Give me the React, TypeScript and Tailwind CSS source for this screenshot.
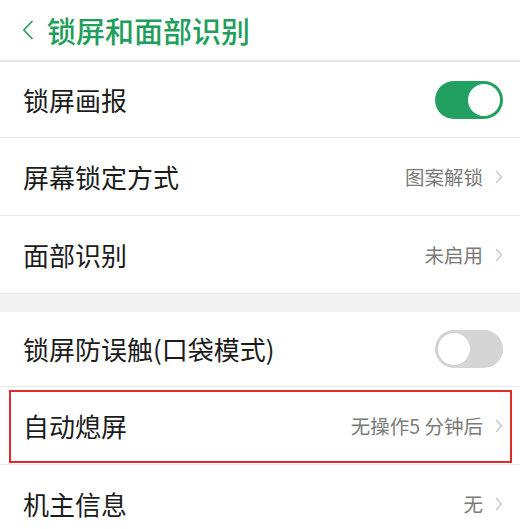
import React from "react";

const font = { fontFamily: '"Noto Sans CJK SC", "Noto Sans", sans-serif' };

function Chevron() {
  return (
    <svg width="8" height="16" viewBox="0 0 8 16" className="ml-[12px]">
      <polyline points="1.5,2.5 6.5,8 1.5,13.5" fill="none" stroke="#c8c8c8" strokeWidth="1.3" strokeLinecap="round" strokeLinejoin="round" />
    </svg>
  );
}

function ToggleOn() {
  return (
    <div className="w-[68px] h-[38px] rounded-full bg-[#22a061] flex items-center justify-end pr-[3px]">
      <div className="w-[32px] h-[32px] rounded-full bg-white" />
    </div>
  );
}

function ToggleOff() {
  return (
    <div className="w-[68px] h-[38px] rounded-full bg-[#d5d5d5] flex items-center justify-start pl-[2px]">
      <div className="w-[34px] h-[34px] rounded-full bg-white border border-[#cfcfcf]" />
    </div>
  );
}

function Row({ label, value, right, h, border = true, highlight = false }: { label: string; value?: string; right?: React.ReactNode; h: string; border?: boolean; highlight?: boolean }) {
  return (
    <div className={`relative flex items-center pl-[23px] pr-[17px] ${h} ${border ? "border-b border-[#e8e8e8]" : ""}`}>
      <span className="text-[26px] text-[#1b1b1b] leading-none flex-1">{label}</span>
      {right}
      {value !== undefined && (
        <div className="flex items-center">
          <span className="text-[19.5px] text-[#7a7a7a] leading-none">{value}</span>
          <Chevron />
        </div>
      )}
      {highlight && <div className="absolute left-[9px] right-[8px] top-[3px] bottom-[1px] border-2 border-[#e02a2a] pointer-events-none" />}
    </div>
  );
}

export default function App() {
  return (
    <div className="w-[520px] h-[529px] bg-white overflow-hidden" style={font}>
      <div className="h-[62px] flex items-center pl-[22px] border-b-2 border-[#e6e6e6]">
        <svg width="12" height="20" viewBox="0 0 12 20">
          <polyline points="10,1.5 1.8,10 10,18.5" fill="none" stroke="#2a9a60" strokeWidth="1.7" strokeLinecap="round" strokeLinejoin="round" />
        </svg>
        <span className="ml-[13px] text-[29px] text-[#1f9e5c] font-medium leading-none">锁屏和面部识别</span>
      </div>
      <Row label="锁屏画报" h="h-[76px]" right={<ToggleOn />} />
      <Row label="屏幕锁定方式" h="h-[78px]" value="图案解锁" />
      <Row label="面部识别" h="h-[77px]" value="未启用" border={false} />
      <div className="h-[19px] bg-[#f3f3f3] border-t border-[#e8e8e8]" />
      <Row label="锁屏防误触(口袋模式)" h="h-[75px]" right={<ToggleOff />} />
      <Row label="自动熄屏" h="h-[78px]" value="无操作5 分钟后" highlight />
      <Row label="机主信息" h="h-[78px]" value="无" border={false} />
    </div>
  );
}
